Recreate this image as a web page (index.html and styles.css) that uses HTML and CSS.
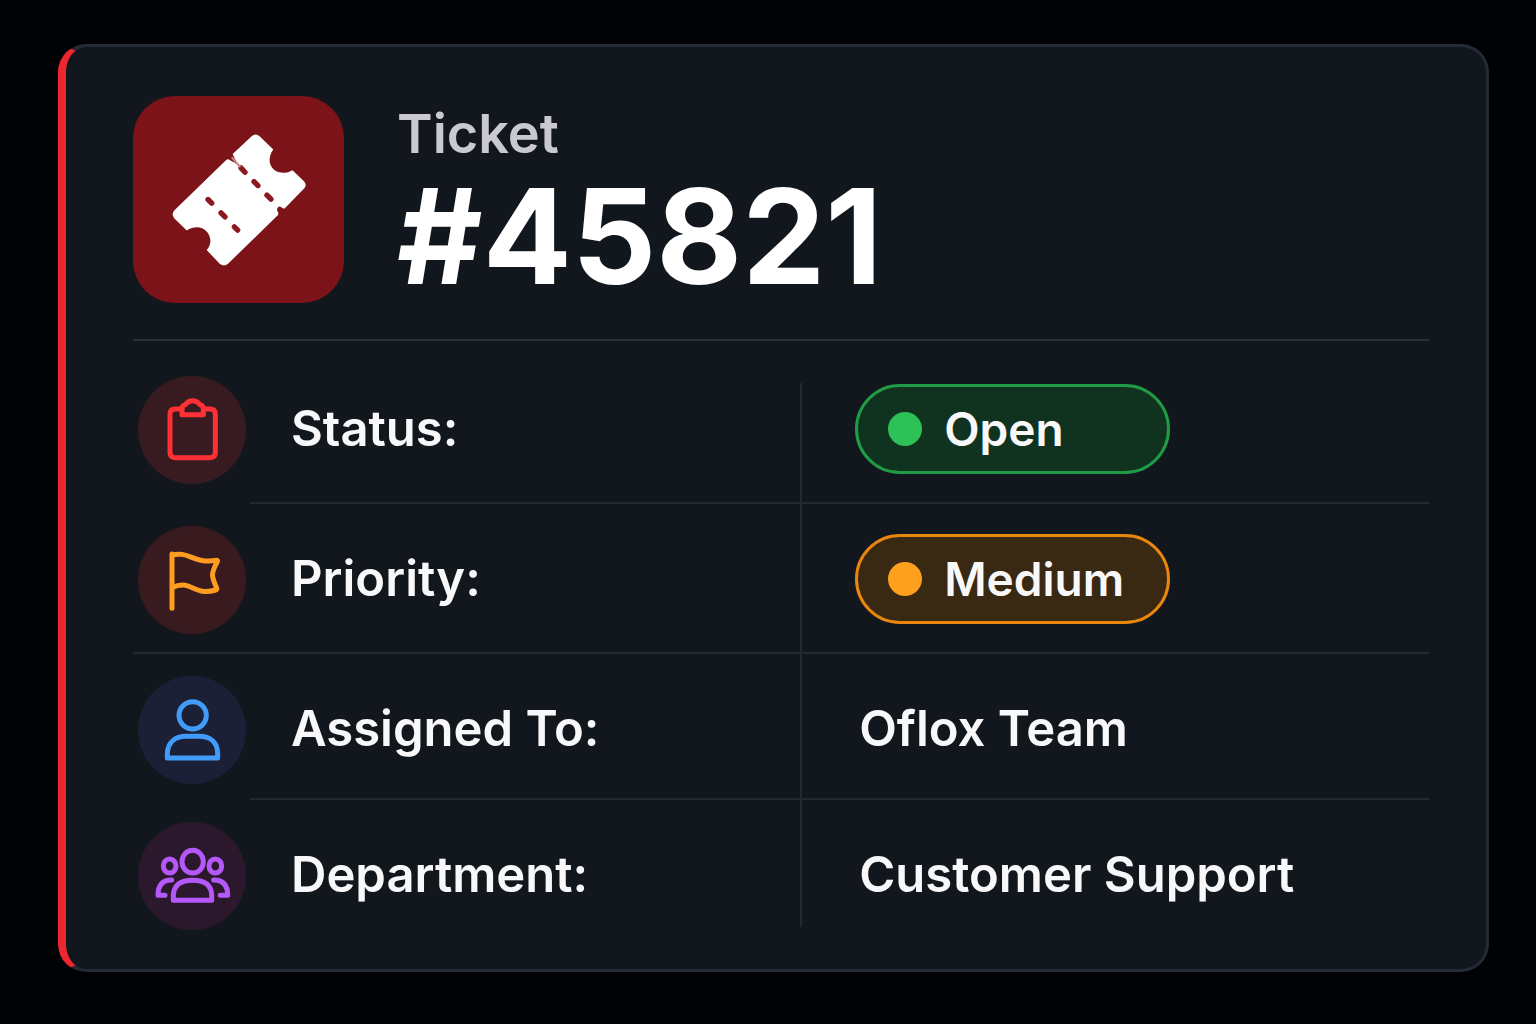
FILE: index.html
```html
<!DOCTYPE html>
<html lang="en">
<head>
    <meta charset="UTF-8">
    <meta name="viewport" content="width=device-width, initial-scale=1.0">
    <title>Ticket #45821</title>
    <link rel="stylesheet" href="styles.css">
</head>
<body>
    <main class="ticket-card">
        <header class="ticket-header">
            <div class="ticket-icon">
                <svg viewBox="0 0 633 622" aria-hidden="true">
                    <path fill="#fff" d="M299 174L356 121Q368 110 380 121L421 161C405 183 406 210 426 224C442 233 462 233 479 223L513 256Q524 267 513 279L455 338Q449 339 445 334Q440 329 434 336Q430 343 436 350V357L285 504Q273 515 260 504L221 463C234 447 236 430 224 411C208 391 184 390 161 404L124 368Q113 355 124 343L278 194Q284 188 290 192L313 205Z"/>
                    <path class="perforation" d="M324 216L336 229M363 257L375 269M402 298L414 310M225 311L236 322M264 351L276 363M304 393L314 403"/>
                    <path class="tear" d="M296 184L322 214"/>
                </svg>
            </div>
            <div class="ticket-title">
                <p>Ticket</p>
                <h1>#45821</h1>
            </div>
        </header>

        <dl class="ticket-details">
            <div class="row row-inset">
                <div class="row-icon red">
                    <svg viewBox="0 0 324 324" aria-hidden="true">
                        <path d="M132 99H112Q96 99 96 115V229Q96 245 112 245H216Q232 245 232 229V115Q232 99 216 99H196"/>
                        <path d="M132 116V96Q133 88 142 86Q150 74 164 74Q178 74 186 86Q195 88 196 96V116Z"/>
                    </svg>
                </div>
                <div class="row-body">
                    <dt>Status:</dt>
                    <dd><span class="badge open">Open</span></dd>
                </div>
            </div>
            <div class="row">
                <div class="row-icon orange">
                    <svg viewBox="0 0 324 324" aria-hidden="true">
                        <path d="M102 84V247M102 88C150 72 166 115 236 103Q240 103 238 107C218 144 220 150 236 186Q238 191 233 192C165 212 160 157 102 185"/>
                    </svg>
                </div>
                <div class="row-body">
                    <dt>Priority:</dt>
                    <dd><span class="badge medium">Medium</span></dd>
                </div>
            </div>
            <div class="row row-inset row-short">
                <div class="row-icon blue">
                    <svg viewBox="0 0 324 324" aria-hidden="true">
                        <circle cx="164" cy="118" r="41"/>
                        <path d="M88 246V232C90 198 112 181 144 181H184C216 181 238 198 239 232V246Z"/>
                    </svg>
                </div>
                <div class="row-body">
                    <dt>Assigned To:</dt>
                    <dd class="text">Oflox Team</dd>
                </div>
            </div>
            <div class="row">
                <div class="row-icon purple">
                    <svg viewBox="0 0 324 324" aria-hidden="true">
                        <ellipse cx="164" cy="119" rx="32" ry="34"/>
                        <ellipse cx="95" cy="132" rx="19" ry="21"/>
                        <ellipse cx="232" cy="132" rx="19" ry="21"/>
                        <path d="M106 235V219C108 188 130 175 164 175C198 175 220 188 221 219V235Z"/>
                        <path d="M101 174C73 174 60 190 60 220H81M227 174C256 174 269 190 269 220H247"/>
                    </svg>
                </div>
                <div class="row-body">
                    <dt>Department:</dt>
                    <dd class="text">Customer Support</dd>
                </div>
            </div>
        </dl>
    </main>
</body>
</html>
```

FILE: styles.css
```css
* {
    margin: 0;
    padding: 0;
    box-sizing: border-box;
    font-family: Inter, 'Liberation Sans', sans-serif;
}

body {
    background: #010307;
    color: #f8f8fa;
    min-height: 100vh;
    padding: 44px 47px 53px 58px;
}

.ticket-card {
    background: #12171e;
    border: 3px solid #242b33;
    border-left: 8px solid #ec2730;
    border-radius: 28px;
    padding: 49px 57px 21px 67px;
    box-shadow: 0 0 24px #000;
}

.ticket-header {
    display: flex;
    align-items: flex-start;
    gap: 53px;
    padding-bottom: 35px;
    border-bottom: 2px solid #2b3038;
}

.ticket-icon {
    width: 211px;
    height: 207px;
    flex-shrink: 0;
    background: #7b1319;
    border-radius: 42px;
}

.ticket-icon svg {
    display: block;
    width: 100%;
    height: 100%;
}

.perforation {
    stroke: #8a1a20;
    stroke-width: 16;
    stroke-linecap: round;
}

.tear {
    stroke: #c98286;
    stroke-width: 6;
}

.ticket-title {
    padding-top: 4px;
}

.ticket-title p {
    color: #c9c9cf;
    font-size: 54px;
    font-weight: 600;
    line-height: 68px;
}

.ticket-title h1 {
    color: #fff;
    font-size: 132px;
    font-weight: 700;
    line-height: 136px;
}

.ticket-details {
    position: relative;
    padding-top: 13px;
}

/* vertical rule between labels and values */
.ticket-details::before {
    content: "";
    position: absolute;
    top: 42px;
    bottom: 21px;
    left: calc(117px + (100% - 117px) * 7 / 15);
    width: 2px;
    background: #242930;
}

.row {
    display: flex;
    border-bottom: 2px solid #242930;
}

.row:last-child,
.row-inset {
    border-bottom: none;
}

.row-icon {
    width: 108px;
    height: 108px;
    flex-shrink: 0;
    margin: 22px 4px 18px 5px;
    border-radius: 50%;
}

.row-icon svg {
    display: block;
    width: 100%;
    height: 100%;
    fill: none;
    stroke: currentColor;
    stroke-width: 15;
    stroke-linecap: round;
    stroke-linejoin: round;
}

.row-icon.red {
    background: #371b20;
    color: #ff3135;
}

.row-icon.orange {
    background: #391a1f;
    color: #ff9d20;
}

.row-icon.blue {
    background: #1c2036;
    color: #419bfa;
}

.row-icon.purple {
    background: #2c182d;
    color: #b558fa;
}

.row-body {
    flex: 1;
    display: grid;
    grid-template-columns: 7fr 8fr;
    align-items: center;
    padding-top: 2px;
}

/* separator that starts after the icon */
.row-inset .row-icon {
    margin-bottom: 20px;
}

.row-inset .row-body {
    border-bottom: 2px solid #242930;
}

.row-short .row-icon {
    margin-bottom: 16px;
}

.row-short .row-body {
    padding-top: 6px;
}

dt,
dd {
    font-size: 49px;
    font-weight: 600;
    line-height: 60px;
}

dt {
    padding-left: 41px;
}

dd {
    padding-left: 55px;
}

dd.text {
    padding-left: 59px;
}

.badge {
    display: flex;
    align-items: center;
    gap: 22px;
    width: 315px;
    height: 90px;
    padding-left: 30px;
    border: 3px solid;
    border-radius: 45px;
    font-size: 46px;
}

.badge::before {
    content: "";
    width: 34px;
    height: 34px;
    border-radius: 50%;
}

.badge.open {
    background: #10331f;
    border-color: #219c46;
}

.badge.open::before {
    background: #2dc158;
}

.badge.medium {
    background: #3a2912;
    border-color: #e8860f;
}

.badge.medium::before {
    background: #ff9f1e;
}
```
